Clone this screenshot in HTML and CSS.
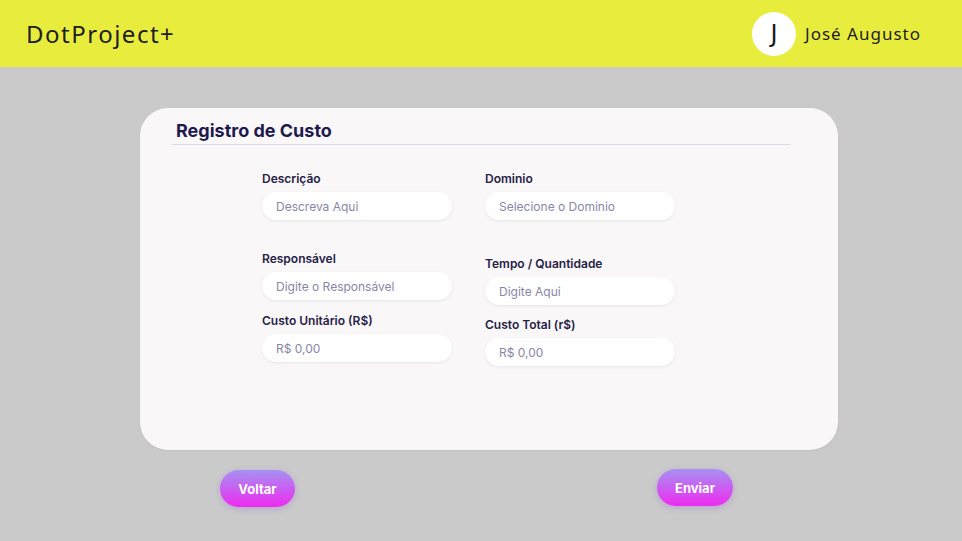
FILE: index.html
```html
<!DOCTYPE html>
<html lang="pt-BR">
<head>
<meta charset="utf-8">
<title>DotProject+</title>
<link rel="stylesheet" href="styles.css">
</head>
<body>
<header class="topbar">
  <div class="brand">DotProject+</div>
  <div class="user">
    <div class="avatar">J</div>
    <span class="user-name">José Augusto</span>
  </div>
</header>
<main class="page">
  <section class="card">
    <h1 class="card-title">Registro de Custo</h1>
    <div class="divider"></div>
    <div class="form">
      <div class="col col-left">
        <label class="lbl l1">Descrição</label>
        <div class="inp">Descreva Aqui</div>
        <label class="lbl l2">Responsável</label>
        <div class="inp">Digite o Responsável</div>
        <label class="lbl l3">Custo Unitário (R$)</label>
        <div class="inp">R$ 0,00</div>
      </div>
      <div class="col col-right">
        <label class="lbl l1">Dominio</label>
        <div class="inp">Selecione o Dominio</div>
        <label class="lbl r2">Tempo / Quantidade</label>
        <div class="inp">Digite Aqui</div>
        <label class="lbl r3">Custo Total (r$)</label>
        <div class="inp">R$ 0,00</div>
      </div>
    </div>
  </section>
  <div class="actions">
    <button class="btn btn-back">Voltar</button>
    <button class="btn btn-send">Enviar</button>
  </div>
</main>
</body>
</html>
```

FILE: styles.css
```css
* { box-sizing: border-box; }
html, body { margin: 0; padding: 0; }
body {
  background: #cacaca;
  width: 962px;
  height: 541px;
  overflow: hidden;
  font-family: Inter, "Noto Sans", sans-serif;
}
.topbar {
  height: 67px;
  background: #e8ed3d;
  display: flex;
  align-items: center;
  justify-content: space-between;
  padding: 0 41px 0 26px;
}
.brand {
  font-family: "Noto Sans", sans-serif;
  font-size: 24px;
  font-weight: 400;
  color: #1d1d1d;
  letter-spacing: 1.5px;
}
.user {
  display: flex;
  align-items: center;
  gap: 9px;
}
.avatar {
  width: 44px;
  height: 44px;
  border-radius: 50%;
  background: #ffffff;
  display: flex;
  align-items: center;
  justify-content: center;
  font-family: "DejaVu Sans", sans-serif;
  font-size: 24px;
  font-weight: 400;
  color: #1d1d1d;
}
.user-name {
  font-family: "Noto Sans", sans-serif;
  font-size: 17px;
  color: #1d1d1d;
  letter-spacing: 1px;
}
.page {
  padding: 41px 0 0 140px;
}
.card {
  width: 698px;
  height: 342px;
  background: #f9f7f8;
  border-radius: 28px;
  padding: 12px 48px 0 32px;
  box-shadow: 0 1px 2px rgba(0,0,0,0.05);
}
.card-title {
  margin: 0 0 0 4px;
  font-size: 18px;
  font-weight: 700;
  color: #1e1a4d;
  line-height: 22px;
}
.divider {
  height: 1px;
  background: #dcd9ee;
  margin-top: 2px;
}
.form {
  display: flex;
  gap: 33px;
  padding-left: 90px;
  padding-top: 27px;
}
.col {
  width: 190px;
  display: flex;
  flex-direction: column;
}
.lbl {
  font-size: 12px;
  line-height: 14px;
  font-weight: 600;
  color: #262146;
  margin-bottom: 6px;
  white-space: nowrap;
}
.col-left .l2 { margin-top: 32px; }
.col-left .l3 { margin-top: 14px; }
.col-right .r2 { margin-top: 37px; }
.col-right .r3 { margin-top: 13px; }
.inp {
  height: 28px;
  background: #ffffff;
  border-radius: 14px;
  padding-left: 14px;
  display: flex;
  align-items: center;
  font-size: 12px;
  color: #8a86a6;
  box-shadow: 0 1px 3px rgba(0,0,0,0.08);
}
.actions {
  width: 698px;
  display: flex;
  justify-content: space-between;
  padding: 20px 105px 0 80px;
}
.btn {
  width: 75px;
  height: 37px;
  border: none;
  border-radius: 19px;
  background: linear-gradient(180deg, #a692f2 0%, #ee2af0 100%);
  color: #ffffff;
  font-family: Inter, sans-serif;
  font-weight: 700;
  font-size: 13px;
  box-shadow: 0 2px 6px rgba(140, 80, 220, 0.3);
}
.btn-send { margin-top: -1px; width: 76px; }
```
